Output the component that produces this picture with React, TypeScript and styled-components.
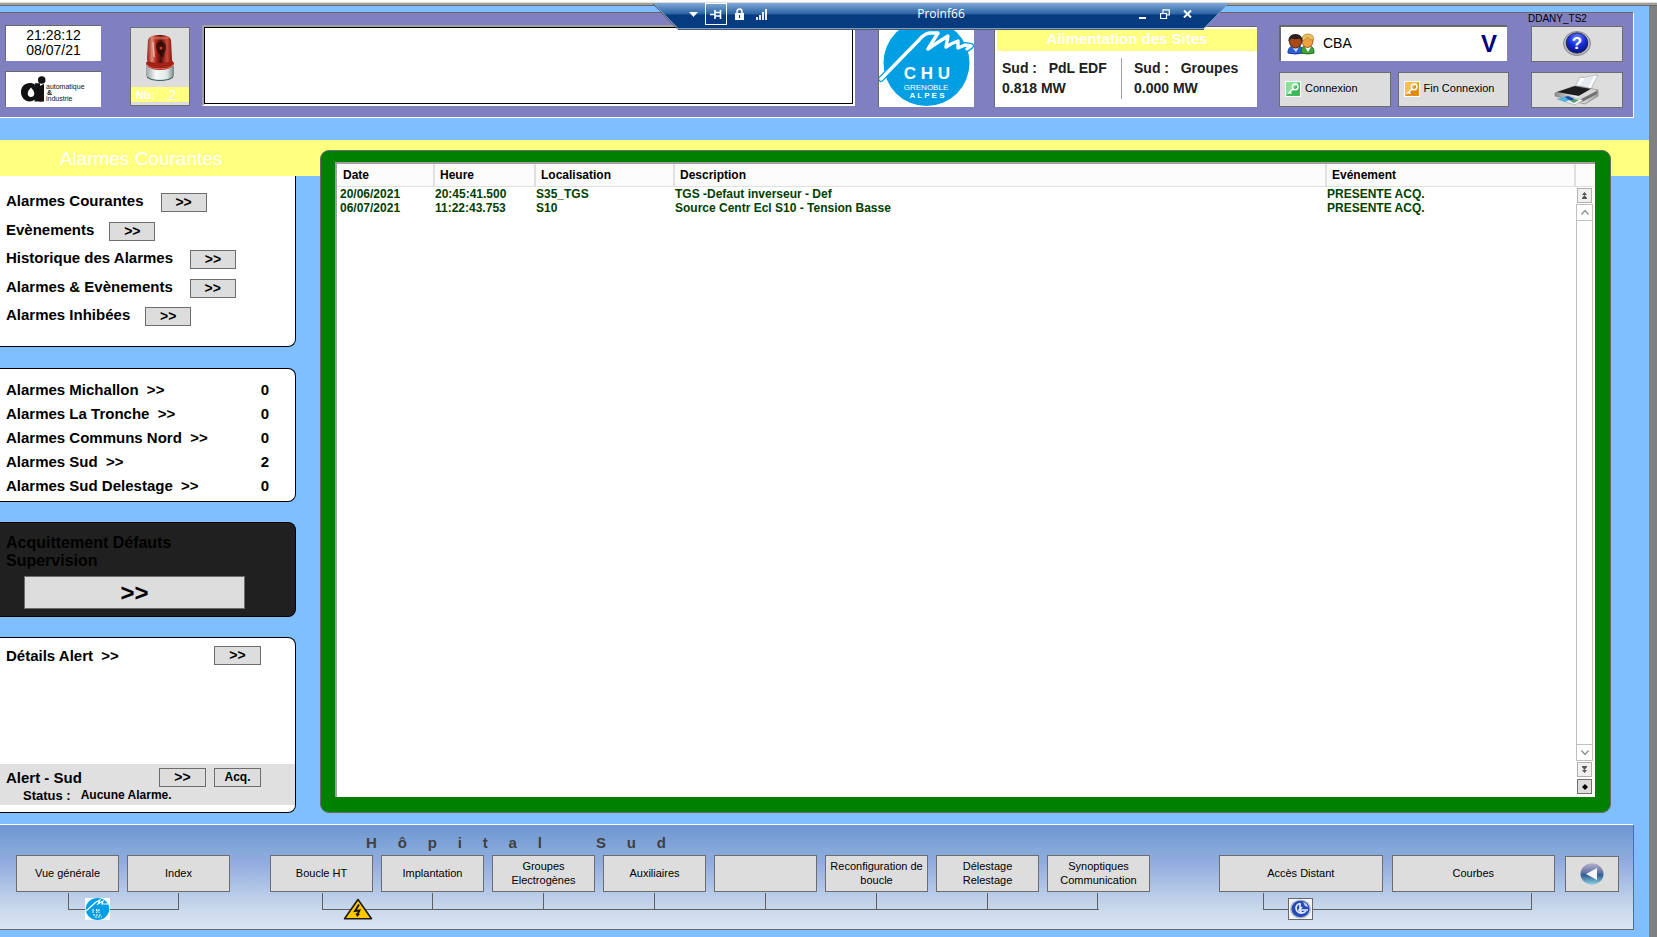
import React from "react";
import styled, { createGlobalStyle } from "styled-components";

const SANS = '"Liberation Sans", Arial, sans-serif';
const SKY = "#80bfff";
const YELLOW = "#ffff80";
const KEY_FACE = "#dddddd";
const KEY_EDGE = "#6d6d6d";
const EDGE = "#696969";
const CHU_BLUE = "#009fe3";

const GlobalStyle = createGlobalStyle`
  *, *::before, *::after { box-sizing: border-box; }
  body { margin: 0; background: #ffffff; font-family: ${SANS}; color: #000000; }
  button, select { font-family: inherit; color: inherit; margin: 0; cursor: pointer; }
  h1, h2, p { margin: 0; font-weight: inherit; }
  svg { display: block; flex: none; }
`;

/* ---------- Window ---------- */

const Page = styled.div`
  position: relative;
  min-height: 100vh;
  display: flex;
  flex-direction: column;
  padding-top: 2px;
`;

const TopEdge = styled.div`
  height: 4px;
  background: #a0a0a0;
  border-top: 1px solid #dcdcdc;
  border-bottom: 1px solid ${EDGE};
`;

const Stage = styled.div`
  flex: 1;
  display: flex;
  flex-direction: column;
  background: ${SKY};
  border-right: 8px solid #808080;
  padding: 6px 0 7px;
`;

/* ---------- Remote session bar ---------- */

const SessionBar = styled.div`
  position: absolute;
  z-index: 2;
  top: 3px;
  left: 653px;
  width: 576px;
  height: 27px;
  color: #ffffff;
`;

const SessionShape = styled.svg`
  position: absolute;
  inset: 0;
`;

const SessionContent = styled.div`
  position: relative;
  display: flex;
  align-items: center;
  justify-content: space-between;
  height: 22px;
  padding: 0 32px 0 30px;
`;

const SessionTools = styled.div`
  display: flex;
  align-items: center;
  gap: 2px;
`;

const SessionTitle = styled.span`
  font: 12px/24px "Open Sans", "Noto Sans", sans-serif;
  padding-right: 22px;
`;

const SessionButton = styled.button<{ $boxed?: boolean }>`
  width: ${(p) => (p.$boxed ? 22 : 20)}px;
  height: 22px;
  padding: 0;
  display: flex;
  align-items: center;
  justify-content: center;
  background: none;
  border: ${(p) => (p.$boxed ? "1px solid #ffffff" : "0")};
`;

/* ---------- Header ---------- */

const Header = styled.header`
  display: flex;
  align-items: flex-start;
  height: 106px;
  margin-right: 15px;
  padding: 12px 10px 0 5px;
  background: #8080c0;
  border: 1px solid #ffffff;
  border-top-color: ${EDGE};
  border-left: 0;
`;

const Stack = styled.div<{ $width: number; $gap: number; $before?: number }>`
  flex: none;
  display: flex;
  flex-direction: column;
  gap: ${(p) => p.$gap}px;
  width: ${(p) => p.$width}px;
  margin-left: ${(p) => p.$before ?? 0}px;
`;

const WhiteTile = styled.div`
  height: 36px;
  background: #ffffff;
  border-top: 1px solid ${EDGE};
  border-left: 1px solid ${EDGE};
`;

const Clock = styled(WhiteTile)`
  padding-top: 2px;
  font-size: 14px;
  line-height: 15px;
  text-align: center;
`;

const Key = styled.button`
  display: flex;
  align-items: center;
  justify-content: center;
  padding: 0;
  background: ${KEY_FACE};
  border: 1px solid ${KEY_EDGE};
  border-radius: 0;
`;

const SirenKey = styled(Key)`
  flex: none;
  flex-direction: column;
  justify-content: flex-start;
  gap: 5px;
  width: 60px;
  height: 79px;
  margin: 2px 0 0 29px;
  padding-top: 6px;
`;

const SirenCount = styled.span`
  display: flex;
  justify-content: space-between;
  align-items: center;
  width: 100%;
  height: 15px;
  padding: 0 13px 0 5px;
  background: ${YELLOW};
  color: #ffffff;
  font-size: 11px;
  font-weight: bold;
`;

const SirenNumber = styled.span`
  font-size: 14px;
  font-weight: normal;
`;

const MessageArea = styled.div`
  flex: 1;
  height: 81px;
  margin-left: 12px;
  border: 2px solid #ffffff;
  border-top-color: #a0a0a0;
  border-left: 3px solid #a0a0a0;
  background: #ffffff;
  outline: 1px solid #000000;
  outline-offset: -3px;
`;

const ChuTile = styled.div`
  flex: none;
  width: 96px;
  height: 82px;
  margin-left: 23px;
  background: #ffffff;
  border-left: 1px solid ${EDGE};
  overflow: hidden;
`;

const Power = styled.section`
  flex: none;
  width: 263px;
  height: 81px;
  margin: 1px 0 0 20px;
  padding: 2px 0 0 2px;
  background: #ffffff;
  border-top: 1px solid ${EDGE};
  border-left: 1px solid ${EDGE};
`;

const PowerTitle = styled.h2`
  height: 22px;
  background: ${YELLOW};
  color: #ffffff;
  font-size: 15px;
  font-weight: bold;
  line-height: 20px;
  text-align: center;
`;

const PowerGrid = styled.div`
  display: flex;
  padding: 7px 4px 0 5px;
  color: #202020;
  font-size: 14px;
  font-weight: bold;
  line-height: 20px;
  white-space: pre;
`;

const PowerCell = styled.div`
  flex: 1;
  height: 41px;
  & + & {
    border-left: 1px solid #a0a0a0;
    padding-left: 12px;
  }
`;

const UserBox = styled.label`
  display: flex;
  align-items: center;
  width: 228px;
  height: 36px;
  padding: 0 10px 0 6px;
  background: #ffffff;
  border-top: 2px solid ${EDGE};
  border-left: 2px solid ${EDGE};
`;

const UserSelect = styled.select`
  flex: 1;
  appearance: none;
  border: 0;
  background: transparent;
  padding: 0 0 2px 8px;
  font-size: 14px;
`;

const UserMark = styled.span`
  color: #000080;
  font-size: 24px;
  font-weight: bold;
`;

const SessionKeys = styled.div`
  display: flex;
  gap: 7px;
`;

const SessionKey = styled(Key)`
  flex: 1;
  justify-content: flex-start;
  gap: 4px;
  height: 35px;
  padding: 0 0 2px 5px;
  font-size: 11px;
`;

const SessionKeyText = styled.span`
  padding-bottom: 2px;
`;

const SideTools = styled.div`
  flex: none;
  display: flex;
  flex-direction: column;
  align-items: flex-end;
  width: 95px;
  margin: -12px 0 0 19px;
`;

const HostName = styled.span`
  align-self: flex-start;
  font-size: 10px;
  line-height: 12px;
  height: 13px;
`;

const ToolKey = styled(Key)`
  width: 92px;
  height: 36px;
  & + & { margin-top: 10px; }
`;

/* ---------- Main area ---------- */

const Main = styled.main`
  flex: 1;
  display: flex;
  gap: 24px;
  margin-top: 22px;
  padding-right: 38px;
  background: linear-gradient(${YELLOW}, ${YELLOW}) 0 0 / 100% 36px no-repeat;
`;

const Side = styled.aside`
  flex: none;
  width: 296px;
  display: flex;
  flex-direction: column;
`;

const PageTitle = styled.h1`
  height: 36px;
  padding-right: 14px;
  color: #ffffff;
  font-size: 19px;
  line-height: 38px;
  text-align: center;
`;

const Panel = styled.section<{ $flush?: boolean; $dark?: boolean }>`
  margin-top: ${(p) => (p.$flush ? 0 : 20)}px;
  background: ${(p) => (p.$dark ? "#202020" : "#ffffff")};
  border: 1px solid #000000;
  border-left: 0;
  border-top-width: ${(p) => (p.$flush ? 0 : 1)}px;
  border-radius: ${(p) => (p.$flush ? "0 0 8px 0" : "0 8px 8px 0")};
  font-size: 15px;
  font-weight: bold;
`;

const MenuPanel = styled(Panel)`
  display: flex;
  flex-direction: column;
  justify-content: space-between;
  height: 171px;
  padding: 17px 0 20px 6px;
`;

const MenuRow = styled.div<{ $gap: number }>`
  display: flex;
  gap: ${(p) => p.$gap}px;
  height: 19px;
  line-height: 15px;
`;

const SmallKey = styled(Key)<{ $wide?: boolean; $caption?: boolean }>`
  width: ${(p) => (p.$wide ? 47 : 46)}px;
  height: 19px;
  font-size: ${(p) => (p.$caption ? 12 : 14)}px;
  font-weight: bold;
  line-height: 15px;
`;

const CountPanel = styled(Panel)`
  height: 134px;
  margin-top: 21px;
  padding: 9px 26px 0 6px;
`;

const CountRow = styled.div`
  display: flex;
  justify-content: space-between;
  line-height: 24px;
  white-space: pre;
`;

const CountLink = styled.a`
  color: inherit;
  text-decoration: none;
`;

const AckPanel = styled(Panel)`
  height: 95px;
  padding: 11px 0 0 6px;
  font-size: 16px;
  line-height: 18px;
`;

const AckKey = styled(Key)`
  width: 221px;
  height: 33px;
  margin: 6px 0 0 18px;
  font-size: 24px;
  font-weight: bold;
`;

const AlertPanel = styled(Panel)`
  flex: 1;
  display: flex;
  flex-direction: column;
  justify-content: space-between;
  padding: 8px 0 7px;
`;

const AlertRow = styled.div`
  display: flex;
  align-items: center;
  justify-content: space-between;
  padding: 0 34px 0 6px;
  line-height: 19px;
  white-space: pre;
`;

const AlertKeys = styled.div`
  display: flex;
  gap: 8px;
`;

const AlertStatus = styled.div`
  height: 41px;
  padding-top: 4px;
  background: #e0e0e0;
`;

const StatusLine = styled.p`
  display: flex;
  gap: 10px;
  padding-left: 23px;
  font-size: 12px;
  line-height: 17px;
`;

const StatusLabel = styled.span`
  font-size: 13px;
`;

/* ---------- Alarm list ---------- */

const Frame = styled.section`
  flex: 1;
  display: flex;
  margin-top: 10px;
  padding: 11px 15px 15px 14px;
  background: #008000;
  border: 1px solid ${EDGE};
  border-radius: 9px;
`;

const List = styled.div`
  flex: 1;
  display: flex;
  background: #ffffff;
  border-top: 2px solid #a0a0a0;
  border-left: 2px solid #a0a0a0;
`;

const ListBody = styled.div`
  flex: 1;
`;

const AlarmTable = styled.table`
  width: 100%;
  table-layout: fixed;
  border-collapse: separate;
  border-spacing: 0;
  font-size: 12px;
  font-weight: bold;
  line-height: 14px;
  text-align: left;
`;

const HeadCell = styled.th<{ $width?: number }>`
  width: ${(p) => (p.$width ? `${p.$width}px` : "auto")};
  height: 23px;
  padding: 0 0 0 5px;
  background: #fcfcfc;
  border-right: 2px solid #e0e0e0;
  border-bottom: 1px solid #e0e0e0;
  &:first-child { padding-left: 6px; }
`;

const Cell = styled.td`
  height: 14px;
  padding: 0;
  color: #004000;
  &:first-child { padding-left: 3px; }
`;

const Scroll = styled.div`
  flex: none;
  display: flex;
  flex-direction: column;
  align-items: center;
  width: 17px;
  margin: 0 2px 2px 0;
`;

const ScrollCap = styled.div`
  align-self: stretch;
  height: 23px;
  background: #fcfcfc;
  border-bottom: 1px solid #e0e0e0;
`;

const ScrollTrack = styled.div`
  flex: 1;
  width: 17px;
  border: 1px solid #c0c0c0;
  border-width: 0 1px;
`;

const ScrollKey = styled.button<{ $tone: "plain" | "soft" | "strong" }>`
  width: ${(p) => (p.$tone === "plain" ? 17 : 15)}px;
  height: ${(p) => (p.$tone === "plain" ? 17 : 15)}px;
  padding: 0;
  margin: ${(p) => (p.$tone === "plain" ? 0 : 1)}px 0;
  display: flex;
  align-items: center;
  justify-content: center;
  background: ${(p) => ({ plain: "#ffffff", soft: "#f0f0f0", strong: KEY_FACE })[p.$tone]};
  border: 1px solid ${(p) => ({ plain: "#c0c0c0", soft: "#adb2b5", strong: "#707070" })[p.$tone]};
`;

/* ---------- Footer ---------- */

const Footer = styled.footer`
  height: 106px;
  margin: 11px 15px 0 0;
  padding: 10px 14px 0 16px;
  border-top: 1px solid #ffffff;
  border-right: 1px solid ${EDGE};
  border-bottom: 1px solid ${EDGE};
  background: linear-gradient(#6d96d0 0%, #86a9da 25%, #8faadf 34%, #b0c4e6 60%, #c6d6ea 78%, #dce7f4 100%);
`;

const SiteName = styled.h2`
  padding-left: 350px;
  color: #404040;
  font-size: 15px;
  font-weight: bold;
  line-height: 16px;
  height: 20px;
  white-space: pre;
`;

const NavBar = styled.nav`
  display: flex;
  align-items: flex-start;
`;

const NavGroup = styled.div<{ $share: number; $before?: number }>`
  position: relative;
  flex: ${(p) => p.$share} 1 0;
  margin-left: ${(p) => p.$before ?? 0}px;
`;

const NavKeys = styled.div<{ $gap: number }>`
  display: flex;
  gap: ${(p) => p.$gap}px;
`;

const NavKey = styled(Key)`
  flex: 1 1 0;
  height: 37px;
  padding-bottom: 2px;
  font-size: 11px;
  line-height: 14px;
  white-space: pre-line;
`;

const BackKey = styled(Key)`
  flex: none;
  width: 54px;
  height: 36px;
  margin: 1px 0 0 10px;
`;

const Wire = styled.div<{ $left: string; $right: string }>`
  display: flex;
  justify-content: space-between;
  height: 17px;
  margin: 1px ${(p) => p.$right} 0 ${(p) => p.$left};
  border-bottom: 1px solid #606060;
`;

const Stem = styled.span`
  width: 1px;
  height: 16px;
  background: #606060;
`;

const Badge = styled.span<{ $left: number; $boxed?: boolean }>`
  position: absolute;
  left: ${(p) => p.$left}px;
  bottom: -10px;
  background: ${(p) => (p.$boxed ? "#f4f4f4" : "transparent")};
  border: ${(p) => (p.$boxed ? `1px solid ${EDGE}` : "0")};
`;

/* ---------- Drawings ---------- */

function AiLogo() {
  return (
    <svg width="95" height="35" viewBox="0 0 95 35" aria-label="automatique & industrie">
      <path d="M24 11c-5.200 0-9 3.800-9 9s3.800 9.500 8.700 9.500c2 0 3.800-.8 4.800-2v2h8c-1.800-.7-2.500-2-2.500-4.500V11.200h-5.200v1.600c-1-1.200-2.500-1.800-4.800-1.800z" fill="#111" />
      <path d="M25 15.500c-1 1.600-3.300 3.200-3.300 6 0 2 1.400 3.500 3.300 3.500s3.300-1.500 3.300-3.500c0-2.800-2.300-4.400-3.300-6z" fill="#fff" />
      <path d="M33.500 14l4.500-2v17.500h-4.500z" fill="#111" />
      <circle cx="35.700" cy="8" r="3.800" fill="#111" />
      <g fontFamily={SANS} fontSize="7" fill="#111">
        <text x="40" y="17">automatique</text>
        <text x="41" y="23" fontWeight="bold">&amp;</text>
        <text x="40" y="29">industrie</text>
      </g>
    </svg>
  );
}

function Siren() {
  return (
    <svg width="30" height="48" viewBox="0 0 30 48" aria-hidden="true">
      <defs>
        <linearGradient id="dome" x1="0" x2="1">
          <stop offset="0" stopColor="#8c1c14" />
          <stop offset=".2" stopColor="#e08a78" />
          <stop offset=".36" stopColor="#b3261a" />
          <stop offset=".55" stopColor="#4d0d0a" />
          <stop offset=".8" stopColor="#d04a38" />
          <stop offset="1" stopColor="#7d1710" />
        </linearGradient>
        <linearGradient id="base" x1="0" x2="1">
          <stop offset="0" stopColor="#9aa3a3" />
          <stop offset=".35" stopColor="#f6fafa" />
          <stop offset=".75" stopColor="#dfe8e8" />
          <stop offset="1" stopColor="#768484" />
        </linearGradient>
      </defs>
      <path d="M1 32v10c2 3 7 5 14 5s12-2 14-5V32z" fill="url(#base)" />
      <path d="M2 43c4 4.600 22 4.600 26 0" fill="none" stroke="#2e5050" strokeWidth="1" />
      <path d="M1 29c0 4 6 7 14 7s14-3 14-7l-3-4H4z" fill="#a32218" />
      <path d="M2 31c4 5 22 5 26 0" fill="none" stroke="#df6a58" strokeWidth="1.200" />
      <path d="M3 6c1-4 6-5 11.500-5S25 2 26 6l1 20c-3 4-22 4-25 0z" fill="url(#dome)" />
      <path d="M6 4c3-2 14-2 18 0-4 2-14 2-18 0z" fill="#d9705e" opacity=".7" />
      <path d="M14 8c4-1 7 1 7 5s-2 7-3 11c-3-3-7-7-7-12 0-2 1-4 3-4z" fill="#2a0806" opacity=".75" />
      <path d="M8 8l1 15" stroke="#f0b0a4" strokeWidth="1.500" />
      <circle cx="16" cy="14" r="1.500" fill="#c24434" />
    </svg>
  );
}

function ChuLogo() {
  const stroke = "M2 54L40 15Q46 8 51 8L59 8L49 24Q59 17 69 11L67 22Q73 18 79 16L79 23L86 20L92 21L88 24";
  return (
    <svg width="95" height="82" viewBox="0 0 95 82" aria-label="CHU Grenoble Alpes">
      <circle cx="47.500" cy="38" r="43" fill={CHU_BLUE} />
      <g fill="none" strokeLinejoin="round" strokeLinecap="round">
        <path d={stroke} stroke={CHU_BLUE} strokeWidth="6" />
        <path d={stroke} stroke="#fff" strokeWidth="3.400" />
      </g>
      <g fontFamily={SANS} fill="#fff" textAnchor="middle">
        <text x="48" y="54" fontSize="17" fontWeight="bold">C H U</text>
        <text x="47" y="65" fontSize="8">GRENOBLE</text>
        <text x="48" y="73" fontSize="8" fontWeight="bold">A L P E S</text>
      </g>
    </svg>
  );
}

function ChuMini() {
  return (
    <svg width="25" height="22" viewBox="0 0 25 22" aria-hidden="true">
      <path d="M0 0h25v22H0z" fill="#fff" />
      <ellipse cx="12.500" cy="11" rx="11.800" ry="11" fill={CHU_BLUE} />
      <path d="M1 13L11 4l4-2-2 4 5-3-1 3 6 0" fill="none" stroke="#fff" strokeWidth="1.200" />
      <path d="M7 12h3M7 14h3M11.500 11v4M14 11v4M11.500 13H14M8 17h9M10 19h7" stroke="#fff" strokeWidth="1" strokeDasharray="2 1" />
    </svg>
  );
}

function Users() {
  return (
    <svg width="28" height="22" viewBox="0 0 28 22" aria-hidden="true">
      <path d="M1 20c0-6 3-7 8-7s7 1 7 7q-8 2-15 0z" fill="#2b5fd8" stroke="#173a8c" />
      <path d="M14 20c0-6 2-7 6-7 5 0 7 1 7 7q-6 2-13 0z" fill="#3ea43a" stroke="#1f6a1d" />
      <path d="M5 14l4 5 3-5z" fill="#cfe0ff" />
      <path d="M18 14l3 5 3-5z" fill="#fff" />
      <ellipse cx="20.500" cy="8" rx="5.500" ry="6.500" fill="#f0a040" stroke="#a85a10" />
      <path d="M15 8c0-5 2-7 6-7s6 2 5.500 6c-3 0-5-1-6-3-1 2-3 3-5.500 4z" fill="#e8c060" stroke="#a87820" strokeWidth=".6" />
      <ellipse cx="8.500" cy="8.500" rx="6" ry="6.500" fill="#a84a18" stroke="#4a1a08" />
      <path d="M1.500 9C1 4 4 1 8.500 1S16 4 15.500 9c-1-2-2-3-3-3.500-3 1-5 1-8 0-1.500.5-2.500 2-3 3.500z" fill="#2a2020" />
    </svg>
  );
}

function KeyTile({ color, dark }: { color: string; dark: string }) {
  return (
    <svg width="16" height="16" viewBox="0 0 15 15" aria-hidden="true">
      <rect x=".5" y=".5" width="14" height="14" fill={dark} stroke="#fff" />
      <path d="M1 1h13L1 14z" fill={color} />
      <circle cx="9.500" cy="5.500" r="2.700" fill="none" stroke="#fff" strokeWidth="1.400" />
      <path d="M7.500 7.500L3 12M4.500 10.500L6 12" stroke="#fff" strokeWidth="1.400" fill="none" />
    </svg>
  );
}

function HelpIcon() {
  return (
    <svg width="28" height="26" viewBox="0 0 28 26" aria-hidden="true">
      <defs>
        <radialGradient id="help" cx=".5" cy=".25" r=".75">
          <stop offset="0" stopColor="#6c8cff" />
          <stop offset=".5" stopColor="#1a2fe0" />
          <stop offset="1" stopColor="#06107c" />
        </radialGradient>
      </defs>
      <ellipse cx="14" cy="12.500" rx="13.500" ry="12" fill="#b4b6be" stroke="#888a94" />
      <ellipse cx="14" cy="12" rx="10.800" ry="10.200" fill="url(#help)" stroke="#223" strokeWidth=".8" />
      <text x="14" y="18" textAnchor="middle" fontFamily={SANS} fontWeight="bold" fontSize="17" fill="#fff">?</text>
    </svg>
  );
}

function PrinterIcon() {
  return (
    <svg width="48" height="32" viewBox="0 0 48 32" aria-hidden="true">
      <defs>
        <linearGradient id="casing" x1="0" x2="1">
          <stop offset="0" stopColor="#8a8a8a" />
          <stop offset=".5" stopColor="#f0f0f0" />
          <stop offset="1" stopColor="#a4a4a4" />
        </linearGradient>
      </defs>
      <path d="M22 13L27 3q5 1 7 0l8-2 3 0-7 14-6 3z" fill="#fbfcfd" stroke="#a8b0b8" strokeWidth=".8" />
      <path d="M26 12l6-8 9-2-6 12z" fill="#e3eaf0" />
      <path d="M2 19l17-6 6-1 20 4v6L32 30l-8-2-9-3-13-3z" fill="url(#casing)" stroke="#808080" strokeWidth=".7" />
      <path d="M4 18l18-6 16 3-12 7z" fill="#1d1d1f" />
      <path d="M24 23l14-8 6 1-15 9z" fill="#d8d8d8" />
      <path d="M28 25l16-8v3l-15 8z" fill="#707070" />
      <path d="M4 25l10-3 16 4-8 5z" fill="#f4f8fb" stroke="#999" strokeWidth=".6" />
      <path d="M5 25l5-2 7 3-5 2z" fill="#49b4e0" />
      <path d="M11 23l4-1 7 3-4 2z" fill="#1c50a8" />
      <path d="M17 27l5-2 4 1-5 3z" fill="#56a060" />
    </svg>
  );
}

function WarningIcon() {
  return (
    <svg width="30" height="22" viewBox="0 0 30 22" aria-hidden="true">
      <path d="M15 1.500L28.500 20.700H1.500z" fill="#ffc800" stroke="#1c1a10" strokeWidth="1.600" strokeLinejoin="round" />
      <path d="M16 6.500l-4 6.500 4.500-.7-2 4" fill="none" stroke="#111" strokeWidth="1.800" />
      <path d="M12.500 15l1.500 4 3-3z" fill="#111" />
    </svg>
  );
}

function RemoteIcon() {
  return (
    <svg width="23" height="20" viewBox="0 0 23 20" aria-hidden="true">
      <ellipse cx="11.500" cy="10" rx="10.500" ry="9.500" fill="#b8bccb" />
      <ellipse cx="11.500" cy="10" rx="9" ry="8.200" fill="#2449b8" />
      <path d="M10.500 4.500A5.500 5 0 1 0 17 12" fill="none" stroke="#dde4fa" strokeWidth="1.800" />
      <path d="M11 4v7h8M13 8l-3 3 3 3" stroke="#e9eeff" strokeWidth="1.600" fill="none" />
      <path d="M14 3q4 1 5 5l-3-1z" fill="#c9d4f8" />
    </svg>
  );
}

function BackIcon() {
  return (
    <svg width="24" height="22" viewBox="0 0 24 22" aria-hidden="true">
      <defs>
        <linearGradient id="back" x1="0" y1="0" x2="0" y2="1">
          <stop offset="0" stopColor="#b4b0cc" />
          <stop offset=".4" stopColor="#6a78a8" />
          <stop offset=".55" stopColor="#2e5f94" />
          <stop offset="1" stopColor="#8fd0e4" />
        </linearGradient>
      </defs>
      <ellipse cx="12" cy="11" rx="11.500" ry="10.700" fill="url(#back)" />
      <path d="M6 11l11-6v12z" fill="#f2f6fa" />
    </svg>
  );
}

/* ---------- Data ---------- */

const menu = [
  { label: "Alarmes Courantes", gap: 17 },
  { label: "Evènements", gap: 15 },
  { label: "Historique des Alarmes", gap: 17 },
  { label: "Alarmes & Evènements", gap: 17 },
  { label: "Alarmes Inhibées", gap: 15 },
];

const counts: [string, number][] = [
  ["Alarmes Michallon", 0],
  ["Alarmes La Tronche", 0],
  ["Alarmes Communs Nord", 0],
  ["Alarmes Sud", 2],
  ["Alarmes Sud Delestage", 0],
];

const alarms = [
  ["20/06/2021", "20:45:41.500", "S35_TGS", "TGS -Defaut inverseur - Def", "PRESENTE ACQ."],
  ["06/07/2021", "11:22:43.753", "S10", "Source Centr Ecl S10 - Tension Basse", "PRESENTE ACQ."],
];

const siteViews = [
  "Boucle HT",
  "Implantation",
  "Groupes\nElectrogènes",
  "Auxiliaires",
  "",
  "Reconfiguration de\nboucle",
  "Délestage\nRelestage",
  "Synoptiques\nCommunication",
];

const siteName = ["Hôpital", "Sud"].map((word) => word.split("").join(" ".repeat(5))).join(" ".repeat(13));

/* ---------- Page ---------- */

function RemoteSession() {
  return (
    <SessionBar>
      <SessionShape width="576" height="27" viewBox="0 0 576 27" aria-hidden="true">
        <defs>
          <linearGradient id="bar" x1="0" y1="0" x2="0" y2="1">
            <stop offset="0" stopColor="#7fa9d8" />
            <stop offset=".42" stopColor="#2b64a4" />
            <stop offset=".46" stopColor="#063b80" />
            <stop offset="1" stopColor="#063b80" />
          </linearGradient>
        </defs>
        <path d="M0 0h576l-26 26H26z" fill="url(#bar)" />
        <path d="M0 0l25 25.500h526L576 0" fill="none" stroke="#78a0cc" strokeWidth="1" />
        <path d="M0 1l25 25.500h526" fill="none" stroke="#555b66" strokeWidth="1" />
      </SessionShape>
      <SessionContent>
        <SessionTools>
          <SessionButton aria-label="Menu">
            <svg width="9" height="5"><path d="M0 0h9L4.500 5z" fill="#fff" /></svg>
          </SessionButton>
          <SessionButton $boxed aria-label="Pin">
            <svg width="12" height="9"><path d="M0 4.500h5M5 0v9M5 2.500h5M5 6h5M10.500 0v9" stroke="#fff" strokeWidth="1.600" /></svg>
          </SessionButton>
          <SessionButton aria-label="Lock">
            <svg width="9" height="12"><path d="M2 6V3.500a2.500 2.500 0 0 1 5 0V6" fill="none" stroke="#fff" strokeWidth="1.500" /><path d="M0 5h9v7H0z" fill="#fff" /><path d="M4 7h1v3H4z" fill="#063b80" /></svg>
          </SessionButton>
          <SessionButton aria-label="Signal">
            <svg width="11" height="11"><path d="M1 8v3M4 6v5M7 3v8M10 0v11" stroke="#fff" strokeWidth="1.800" /></svg>
          </SessionButton>
        </SessionTools>
        <SessionTitle>Proinf66</SessionTitle>
        <SessionTools>
          <SessionButton aria-label="Minimize">
            <svg width="8" height="10"><path d="M0 9h7" stroke="#fff" strokeWidth="2" /></svg>
          </SessionButton>
          <SessionButton aria-label="Restore">
            <svg width="10" height="10"><path d="M.5 4.500h6v5h-6zM3 4V.8h6.300V6H7" fill="none" stroke="#fff" strokeWidth="1.200" /></svg>
          </SessionButton>
          <SessionButton aria-label="Close">
            <svg width="9" height="8"><path d="M1 .5l7 7M8 .5l-7 7" stroke="#fff" strokeWidth="2" /></svg>
          </SessionButton>
        </SessionTools>
      </SessionContent>
    </SessionBar>
  );
}

function TopHeader() {
  return (
    <Header>
      <Stack $width={96} $gap={10}>
        <Clock>
          <div>21:28:12</div>
          <div>08/07/21</div>
        </Clock>
        <WhiteTile><AiLogo /></WhiteTile>
      </Stack>
      <SirenKey>
        <Siren />
        <SirenCount>Nb:<SirenNumber>2</SirenNumber></SirenCount>
      </SirenKey>
      <MessageArea role="status" />
      <ChuTile><ChuLogo /></ChuTile>
      <Power>
        <PowerTitle>Alimentation des Sites</PowerTitle>
        <PowerGrid>
          <PowerCell><div>Sud :   PdL EDF</div><div>0.818 MW</div></PowerCell>
          <PowerCell><div>Sud :   Groupes</div><div>0.000 MW</div></PowerCell>
        </PowerGrid>
      </Power>
      <Stack $width={230} $gap={11} $before={22}>
        <UserBox>
          <Users />
          <UserSelect aria-label="Utilisateur"><option>CBA</option></UserSelect>
          <UserMark aria-hidden="true">V</UserMark>
        </UserBox>
        <SessionKeys>
          <SessionKey><KeyTile color="#8ae096" dark="#3cb858" /><SessionKeyText>Connexion</SessionKeyText></SessionKey>
          <SessionKey><KeyTile color="#f8c050" dark="#e08a10" /><SessionKeyText>Fin Connexion</SessionKeyText></SessionKey>
        </SessionKeys>
      </Stack>
      <SideTools>
        <HostName>DDANY_TS2</HostName>
        <ToolKey aria-label="Aide"><HelpIcon /></ToolKey>
        <ToolKey aria-label="Imprimer"><PrinterIcon /></ToolKey>
      </SideTools>
    </Header>
  );
}

function SidePanels() {
  return (
    <Side>
      <PageTitle>Alarmes Courantes</PageTitle>
      <MenuPanel $flush>
        {menu.map((m) => (
          <MenuRow key={m.label} $gap={m.gap}>
            <span>{m.label}</span>
            <SmallKey aria-label={m.label}>&gt;&gt;</SmallKey>
          </MenuRow>
        ))}
      </MenuPanel>
      <CountPanel>
        {counts.map(([label, n]) => (
          <CountRow key={label}>
            <CountLink href="#">{label + "  >>"}</CountLink>
            <span>{n}</span>
          </CountRow>
        ))}
      </CountPanel>
      <AckPanel $dark>
        <div>Acquittement Défauts</div>
        <div>Supervision</div>
        <AckKey aria-label="Acquittement Défauts Supervision">&gt;&gt;</AckKey>
      </AckPanel>
      <AlertPanel>
        <AlertRow>
          <span>{"Détails Alert  >>"}</span>
          <SmallKey $wide aria-label="Détails Alert">&gt;&gt;</SmallKey>
        </AlertRow>
        <AlertStatus>
          <AlertRow>
            <span>Alert - Sud</span>
            <AlertKeys>
              <SmallKey $wide aria-label="Alert - Sud">&gt;&gt;</SmallKey>
              <SmallKey $wide $caption>Acq.</SmallKey>
            </AlertKeys>
          </AlertRow>
          <StatusLine><StatusLabel>Status :</StatusLabel>Aucune Alarme.</StatusLine>
        </AlertStatus>
      </AlertPanel>
    </Side>
  );
}

function AlarmList() {
  return (
    <Frame>
      <List>
        <ListBody>
          <AlarmTable>
            <thead>
              <tr>
                <HeadCell $width={98}>Date</HeadCell>
                <HeadCell $width={101}>Heure</HeadCell>
                <HeadCell $width={139}>Localisation</HeadCell>
                <HeadCell>Description</HeadCell>
                <HeadCell $width={249}>Evénement</HeadCell>
              </tr>
            </thead>
            <tbody>
              {alarms.map((row) => (
                <tr key={row[1]}>
                  {row.map((text) => <Cell key={text}>{text}</Cell>)}
                </tr>
              ))}
            </tbody>
          </AlarmTable>
        </ListBody>
        <Scroll>
          <ScrollCap />
          <ScrollKey $tone="soft" aria-label="Début">
            <svg width="5" height="7"><path d="M0 3l2.500-3L5 3zM0 6l2.500-3L5 6zM0 6h5v1H0z" fill="#555" /></svg>
          </ScrollKey>
          <ScrollKey $tone="plain" aria-label="Monter">
            <svg width="8" height="5"><path d="M.5 4.500l3.500-4 3.500 4" fill="none" stroke="#888" strokeWidth="1.200" /></svg>
          </ScrollKey>
          <ScrollTrack />
          <ScrollKey $tone="plain" aria-label="Descendre">
            <svg width="8" height="5"><path d="M.5 .5l3.500 4 3.500-4" fill="none" stroke="#888" strokeWidth="1.200" /></svg>
          </ScrollKey>
          <ScrollKey $tone="soft" aria-label="Fin">
            <svg width="5" height="7"><path d="M0 0h5v1H0zM0 1h5L2.500 4zM0 4h5L2.500 7z" fill="#555" /></svg>
          </ScrollKey>
          <ScrollKey $tone="strong" aria-label="Position">
            <svg width="6" height="6"><path d="M3 0l3 3-3 3-3-3z" fill="#000" /></svg>
          </ScrollKey>
        </Scroll>
      </List>
    </Frame>
  );
}

function BottomNav() {
  const pairInset = "calc((100% - 8px) / 4)";
  const viewInset = "calc((100% - 56px) / 16)";
  return (
    <Footer>
      <SiteName>{siteName}</SiteName>
      <NavBar>
        <NavGroup $share={214}>
          <NavKeys $gap={8}>
            <NavKey>Vue générale</NavKey>
            <NavKey>Index</NavKey>
          </NavKeys>
          <Wire $left={pairInset} $right={pairInset}><Stem /><Stem /></Wire>
          <Badge $left={69}><ChuMini /></Badge>
        </NavGroup>
        <NavGroup $share={880} $before={40}>
          <NavKeys $gap={8}>
            {siteViews.map((v, i) => (
              <NavKey key={i} aria-label={v ? undefined : "Vue libre"}>{v}</NavKey>
            ))}
          </NavKeys>
          <Wire $left={viewInset} $right={viewInset}>
            {siteViews.map((_, i) => <Stem key={i} />)}
          </Wire>
          <Badge $left={73}><WarningIcon /></Badge>
        </NavGroup>
        <NavGroup $share={336} $before={69}>
          <NavKeys $gap={9}>
            <NavKey>Accès Distant</NavKey>
            <NavKey>Courbes</NavKey>
          </NavKeys>
          <Wire $left="44px" $right="23px"><Stem /><Stem /></Wire>
          <Badge $left={69} $boxed><RemoteIcon /></Badge>
        </NavGroup>
        <BackKey aria-label="Retour"><BackIcon /></BackKey>
      </NavBar>
    </Footer>
  );
}

export default function App() {
  return (
    <Page>
      <GlobalStyle />
      <TopEdge />
      <RemoteSession />
      <Stage>
        <TopHeader />
        <Main>
          <SidePanels />
          <AlarmList />
        </Main>
        <BottomNav />
      </Stage>
    </Page>
  );
}
